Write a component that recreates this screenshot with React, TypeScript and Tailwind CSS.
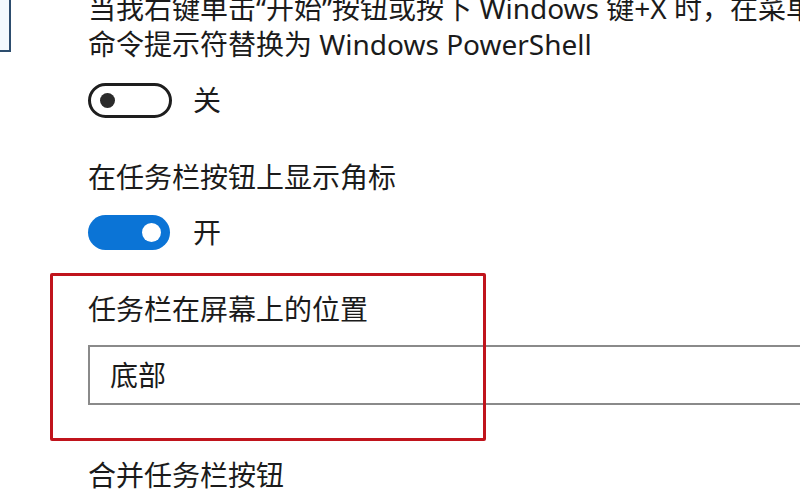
import React from "react";

function Toggle({ on }: { on: boolean }) {
  if (on) {
    return (
      <div className="w-[82px] h-[35px] rounded-full bg-[#0b74d6] flex items-center justify-end pr-[9px]">
        <div className="w-[19px] h-[19px] rounded-full bg-white" />
      </div>
    );
  }
  return (
    <div className="w-[84px] h-[35px] rounded-full border-[3px] border-[#1e1e1e] flex items-center pl-[9px]">
      <div className="w-[15px] h-[15px] rounded-full bg-[#2b2b2b]" />
    </div>
  );
}

export default function App() {
  return (
    <div
      className="relative w-[800px] h-[500px] overflow-hidden bg-white text-[#1b1b1b] flex"
      style={{ fontFamily: '"Noto Sans", "Noto Sans CJK SC", sans-serif' }}
    >
      {/* sidebar edge, cut off */}
      <div className="w-[88px] shrink-0">
        <div className="w-[11px] h-[52px] border-r-2 border-b-2 border-[#2d4d6e] bg-[#f3f9fd]" />
      </div>

      <div className="flex-1 flex flex-col text-[28px] leading-[36px] -mt-[10px]">
        <div className="whitespace-nowrap">当我右键单击“开始”按钮或按下 Windows 键+X 时，在菜单中将</div>
        <div className="whitespace-nowrap">命令提示符替换为 Windows PowerShell</div>

        <div className="mt-[20px] flex items-center gap-[21px]">
          <Toggle on={false} />
          <span>关</span>
        </div>

        <div className="mt-[41px]">在任务栏按钮上显示角标</div>
        <div className="mt-[19px] flex items-center gap-[23px]">
          <Toggle on={true} />
          <span>开</span>
        </div>

        <div className="mt-[41px]">任务栏在屏幕上的位置</div>
        <div className="mt-[18px] h-[60px] w-[760px] border-2 border-[#8a8a8a] flex items-center pl-[20px]">
          底部
        </div>

        <div className="mt-[52px]">合并任务栏按钮</div>
      </div>

      {/* red highlight annotation */}
      <div className="absolute left-[50px] top-[273px] w-[436px] h-[168px] border-[3px] border-[#c0141c] rounded-[2px]" />
    </div>
  );
}
